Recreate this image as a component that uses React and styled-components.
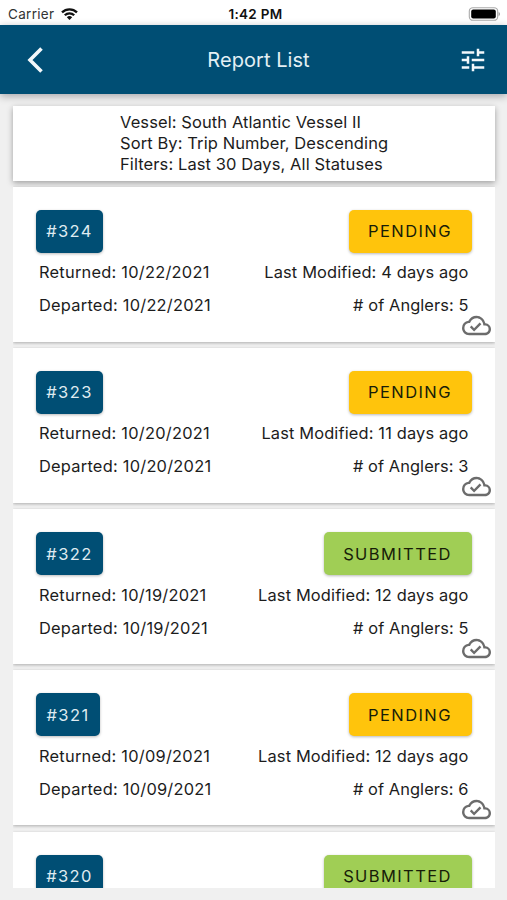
import React from "react";
import styled, { createGlobalStyle } from "styled-components";
import { MdOutlineCloudDone, MdTune } from "react-icons/md";

const GlobalStyle = createGlobalStyle`
  * {
    box-sizing: border-box;
  }

  body {
    margin: 0;
    background-color: #f0f0f0;
    color: #1c1c1c;
    font-family: Inter, "Liberation Sans", sans-serif;
  }
`;

const Screen = styled.div`
  display: flex;
  flex-direction: column;
  width: 507px;
  height: 900px;
  overflow: hidden;
`;

const StatusBar = styled.div`
  display: grid;
  grid-template-columns: 1fr auto 1fr;
  align-items: center;
  flex: none;
  height: 25px;
  padding: 2px 7px 0 8px;
  background-color: white;
  font-size: 13.5px;
`;

const Carrier = styled.div`
  display: flex;
  align-items: center;
  gap: 7px;
  color: #333;
  letter-spacing: 0.3px;
`;

const Clock = styled.div`
  padding-left: 3px;
  font-weight: 600;
  letter-spacing: 0.3px;
  color: #111;
`;

const Battery = styled.svg`
  justify-self: end;
`;

const Header = styled.header`
  display: grid;
  grid-template-columns: 48px 1fr 48px;
  align-items: center;
  flex: none;
  height: 69px;
  padding: 0 10px 0 11px;
  background-color: #004e74;
  color: white;
  box-shadow: 0 2px 8px rgba(0, 0, 20, 0.32);
  position: relative;
`;

const Title = styled.h1`
  margin: 0;
  padding-left: 9px;
  color: #e4f0f5;
  font-size: 20px;
  font-weight: 400;
  letter-spacing: 0.05px;
  text-align: center;
`;

const IconButton = styled.button`
  display: flex;
  justify-content: center;
  align-items: center;
  padding: 0;
  border: none;
  background: none;
  color: #f2f8fb;
  cursor: pointer;
`;

const Content = styled.main`
  display: flex;
  flex-direction: column;
  height: 794px;
  margin: 0 12px 12px 13px;
  padding-top: 12px;
`;

const Summary = styled.section`
  flex: none;
  height: 74.5px;
  padding: 6px 0 0 107px;
  background-color: white;
  box-shadow: 0 2px 6px rgba(0, 0, 0, 0.34);
  font-size: 16.5px;
  letter-spacing: 0.09px;
  line-height: 20.8px;
`;

const List = styled.div`
  display: flex;
  flex-direction: column;
  gap: 6.3px;
  flex: 1;
  min-height: 0;
  padding-top: 6px;
  overflow: hidden;
`;

const Card = styled.article`
  display: flex;
  flex-direction: column;
  flex: none;
  height: 155px;
  padding: 23px 23.5px 0 23px;
  background-color: white;
  box-shadow: 0 1px 3px rgba(0, 0, 0, 0.28);
  position: relative;
`;

const Row = styled.div`
  display: flex;
  justify-content: space-between;
  align-items: center;
  height: 33px;
  padding: 0 3px;
  font-size: 16.4px;
`;

const TopRow = styled(Row)`
  height: 43px;
  margin-bottom: 3px;
  padding: 0;
`;

const Detail = styled.span`
  letter-spacing: ${(props) => props.spacing}px;
`;

const Tag = styled.div`
  display: flex;
  justify-content: center;
  align-items: center;
  height: 43px;
  border-radius: 5px;
  box-shadow: 0 1px 3px rgba(0, 0, 0, 0.28);
  font-size: 16.5px;
  letter-spacing: 1.4px;
`;

const TripNumber = styled(Tag)`
  width: ${(props) => props.width}px;
  background-color: #004e74;
  color: #dfebf1;
`;

const Status = styled(Tag)`
  width: ${(props) => (props.$submitted ? 148 : 123)}px;
  background-color: ${(props) => (props.$submitted ? "#a0ce55" : "#ffc40c")};
  color: #171d08;
`;

const Synced = styled(MdOutlineCloudDone)`
  position: absolute;
  right: 4px;
  bottom: 1.5px;
  width: 29px;
  height: 29px;
  color: #6c6c6c;
`;

const reports = [
  { trip: "324", status: "PENDING", date: "10/22/2021", modified: "4 days ago", anglers: 5 },
  { trip: "323", status: "PENDING", date: "10/20/2021", modified: "11 days ago", anglers: 3 },
  { trip: "322", status: "SUBMITTED", date: "10/19/2021", modified: "12 days ago", anglers: 5 },
  { trip: "321", status: "PENDING", date: "10/09/2021", modified: "12 days ago", anglers: 6, tagWidth: 64 },
  { trip: "320", status: "SUBMITTED" },
];

function Report({ report }) {
  return (
    <Card>
      <TopRow>
        <TripNumber width={report.tagWidth || 67}>#{report.trip}</TripNumber>
        <Status $submitted={report.status === "SUBMITTED"}>{report.status}</Status>
      </TopRow>
      {report.date && (
        <>
          <Row>
            <Detail spacing={0.24}>Returned: {report.date}</Detail>
            <Detail spacing={0.15}>Last Modified: {report.modified}</Detail>
          </Row>
          <Row>
            <Detail spacing={0.24}>Departed: {report.date}</Detail>
            <Detail spacing={0.08}># of Anglers: {report.anglers}</Detail>
          </Row>
          <Synced />
        </>
      )}
    </Card>
  );
}

function App() {
  return (
    <Screen>
      <GlobalStyle />
      <StatusBar>
        <Carrier>
          Carrier
          <svg width="17" height="12" viewBox="0 0 17 12" fill="none" stroke="#111" strokeWidth="2.3">
            <path d="M1 4.4a10.8 10.8 0 0 1 15 0" />
            <path d="M3.8 7.3a6.7 6.7 0 0 1 9.4 0" />
            <path d="M8.5 12 5.8 9.3a3.9 3.9 0 0 1 5.4 0z" fill="#111" stroke="none" />
          </svg>
        </Carrier>
        <Clock>1:42 PM</Clock>
        <Battery width="32" height="14" viewBox="0 0 32 14">
          <rect x="1.3" y="0.7" width="28.4" height="12.6" rx="3.6" fill="none" stroke="#aaa" strokeWidth="1.1" />
          <rect x="3.2" y="2.4" width="24.6" height="9.2" rx="2" fill="#000" />
          <path d="M30.6 5v4.2a2.3 2.3 0 0 0 0-4.2z" fill="#999" />
        </Battery>
      </StatusBar>
      <Header>
        <IconButton aria-label="Back">
          <svg width="18" height="28" viewBox="0 0 18 28" fill="none" stroke="currentColor" strokeWidth="3.6">
            <path d="M15.5 2.5 4 14l11.5 11.5" />
          </svg>
        </IconButton>
        <Title>Report List</Title>
        <IconButton aria-label="Filters">
          <MdTune size={30} />
        </IconButton>
      </Header>
      <Content>
        <Summary>
          <div>Vessel: South Atlantic Vessel II</div>
          <div>Sort By: Trip Number, Descending</div>
          <div>Filters: Last 30 Days, All Statuses</div>
        </Summary>
        <List>
          {reports.map((report) => (
            <Report key={report.trip} report={report} />
          ))}
        </List>
      </Content>
    </Screen>
  );
}

export default App;
